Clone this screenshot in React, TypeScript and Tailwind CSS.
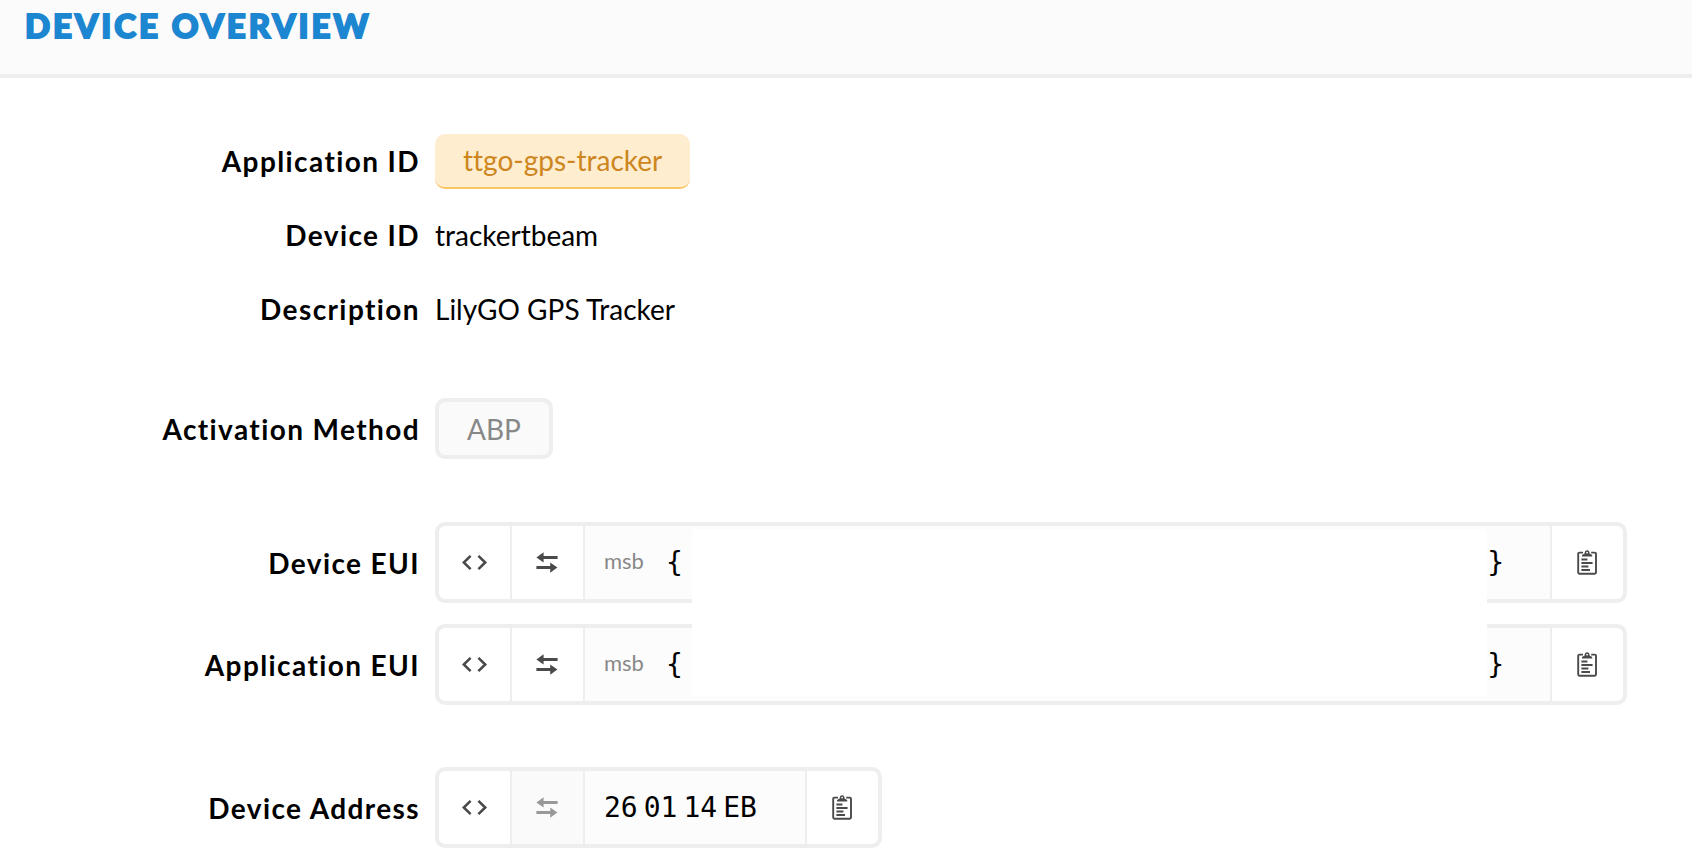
import clsx from 'clsx';
import { ReactNode } from 'react';

function CodeIcon() {
    return (
        <svg width="26" height="16" viewBox="0 0 26 16" fill="none" stroke="currentColor" strokeWidth="2.6" aria-hidden="true">
            <path d="M8.6.9 1.8 7.5l6.8 6.6M16.4.9l6.8 6.6-6.8 6.6" />
        </svg>
    );
}

function SwapIcon() {
    return (
        <svg width="24" height="22" viewBox="0 0 24 22" fill="currentColor" aria-hidden="true">
            <path d="M.4 5.4 7.6.3v3.6h14v3H7.6v3.6zM21.4 15.6l-7.2-5.1v3.6H.4v3h13.8v3.6z" />
        </svg>
    );
}

function ClipboardIcon() {
    return (
        <svg width="22" height="26" viewBox="0 0 22 26" aria-hidden="true">
            <path
                d="M6 2.6H2.4Q1.2 2.6 1.2 3.8V22.6Q1.2 23.8 2.4 23.8H17.8Q19 23.8 19 22.6V3.8Q19 2.6 17.8 2.6H14.2"
                fill="none"
                stroke="currentColor"
                strokeWidth="1.9"
            />
            <path
                fillRule="evenodd"
                fill="currentColor"
                d="M5 6.4V5L7.6 3.4Q7.8.2 10.1.2t2.5 3.2L15.2 5v1.4zM10.1 1.7a.9.9 0 1 0 0 1.8.9.9 0 0 0 0-1.8z"
            />
            <path d="M4.4 9.5h6M4.4 13h11.2M4.4 16.5h7M4.4 20h8.6" fill="none" stroke="currentColor" strokeWidth="1.8" />
        </svg>
    );
}

function Row({ label, className, children }: { label: string; className?: string; children: ReactNode }) {
    return (
        <div className={clsx('flex items-center gap-[15px]', className)}>
            <dt className="w-[420px] shrink-0 text-right font-bold tracking-wider">{label}</dt>
            <dd className="flex min-w-0 flex-1">{children}</dd>
        </div>
    );
}

const buttonClass = 'flex w-[73px] shrink-0 items-center justify-center border-[#eee] text-[#4a4a4a] disabled:bg-[#fafafa] disabled:text-[#999]';

function BytesField({ name, full, canSwap = true, children }: { name: string; full?: boolean; canSwap?: boolean; children: ReactNode }) {
    return (
        <div className={clsx('flex h-[81px] overflow-hidden rounded-[10px] border-4 border-[#eee] bg-white', full && 'w-full')}>
            <button type="button" aria-label={`Toggle ${name} format`} className={clsx(buttonClass, 'border-r-2')}>
                <CodeIcon />
            </button>
            <button type="button" aria-label={`Switch ${name} byte order`} disabled={!canSwap} className={clsx(buttonClass, 'border-r-2')}>
                <SwapIcon />
            </button>
            <div className={clsx('flex items-center bg-[#fcfcfc] pl-[19px]', full ? 'flex-1' : 'w-[220px]')}>{children}</div>
            <button type="button" aria-label={`Copy ${name}`} className={clsx(buttonClass, 'border-l-2')}>
                <ClipboardIcon />
            </button>
        </div>
    );
}

function HiddenBytes() {
    return (
        <>
            <span className="pb-1 text-[22px] text-[#888]">msb</span>
            <code className="ml-[22px] flex flex-1 justify-between pr-[46px] font-['DejaVu_Sans_Mono','Liberation_Mono',monospace]">
                <span>{'{'}</span>
                <span>{'}'}</span>
            </code>
        </>
    );
}

const address = ['26', '01', '14', 'EB'];

export default function DeviceOverview() {
    return (
        <div className="min-h-screen bg-white font-['Lato','Liberation_Sans',sans-serif] text-[28px] leading-10 text-black [font-variant-ligatures:none]">
            <header className="h-[78px] border-b-4 border-[#eee] bg-[#fbfbfb] pt-[5px] pl-[25px]">
                <h1 className="text-[33px] font-black tracking-[3px] text-[#1c86d1] uppercase [-webkit-text-stroke:2px_#1c86d1]">
                    Device Overview
                </h1>
            </header>

            <dl className="pt-[46px] pr-[65px]">
                <Row label="Application ID" className="min-h-[74px]">
                    <a
                        href="#application"
                        className="flex h-[55px] items-center rounded-[10px] border-b-2 border-[#fcc563] bg-[#ffedd0] px-7 text-[#cd8620]"
                    >
                        ttgo-gps-tracker
                    </a>
                </Row>
                <Row label="Device ID" className="min-h-[74px]">
                    trackertbeam
                </Row>
                <Row label="Description" className="min-h-[74px]">
                    LilyGO GPS Tracker
                </Row>
                <Row label="Activation Method" className="mt-[52px]">
                    <span className="flex h-[61px] items-center rounded-[10px] border-4 border-[#eee] bg-[#fafafa] px-7 text-[#888]">ABP</span>
                </Row>

                <div className="relative mt-[63px] flex flex-col gap-[21px]">
                    <Row label="Device EUI">
                        <BytesField name="device EUI" full>
                            <HiddenBytes />
                        </BytesField>
                    </Row>
                    <Row label="Application EUI">
                        <BytesField name="application EUI" full>
                            <HiddenBytes />
                        </BytesField>
                    </Row>
                    <div className="absolute top-[7px] right-[140px] bottom-[9px] left-[692px] bg-white" />
                </div>

                <Row label="Device Address" className="mt-[62px]">
                    <BytesField name="device address" canSwap={false}>
                        <code className="flex gap-1.5 font-['DejaVu_Sans_Mono','Liberation_Mono',monospace]">
                            {address.map((byte) => (
                                <span key={byte}>{byte}</span>
                            ))}
                        </code>
                    </BytesField>
                </Row>
            </dl>
        </div>
    );
}
